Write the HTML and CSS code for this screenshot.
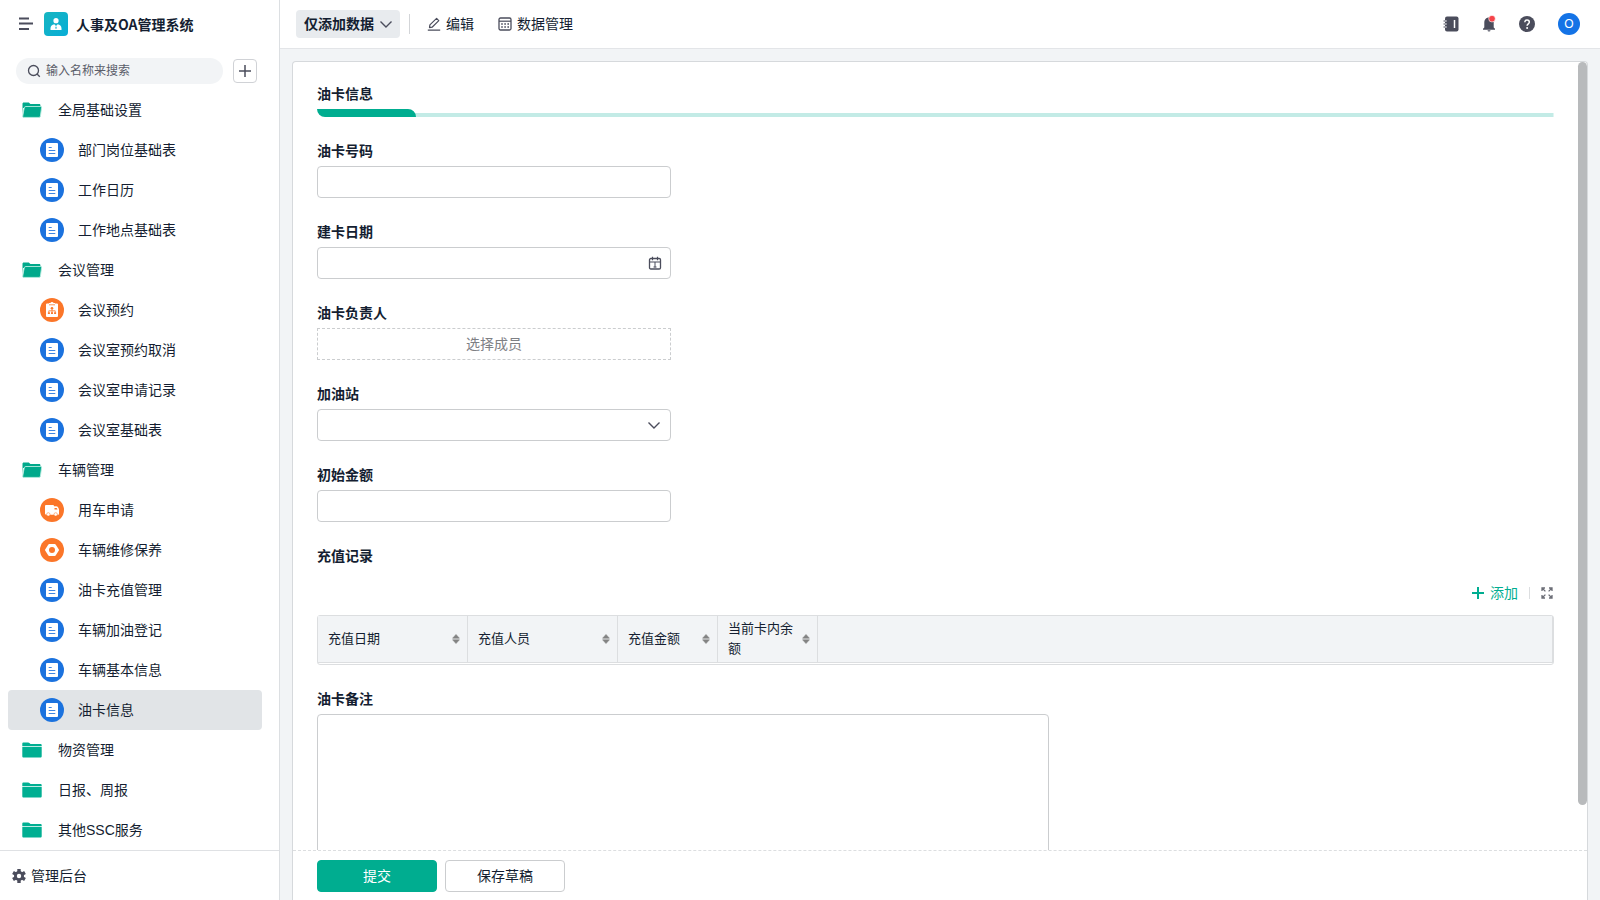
FILE: index.html
```html
<!DOCTYPE html>
<html lang="zh-CN">
<head>
<meta charset="utf-8">
<title>人事及OA管理系统</title>
<link rel="stylesheet" href="styles.css">
</head>
<body>
<svg class="sprite" aria-hidden="true">
  <symbol id="doc" viewBox="0 0 24 24"><circle cx="12" cy="12" r="12" fill="#1b72de"/><rect x="6" y="5" width="12" height="14" rx="1" fill="#fff"/><path d="M8.700 9.500h3M8.700 12.500h6.600M8.700 15.500h6.600" stroke="#3f86e2" stroke-width="1.200"/></symbol>
  <symbol id="meeting" viewBox="0 0 24 24"><circle cx="12" cy="12" r="12" fill="#fb7629"/><path d="M7 5.500h2v-.5h1.500a1.500 1 0 0 1 3 0H15v.5h2a1 1 0 0 1 1 1V18a1 1 0 0 1-1 1H7a1 1 0 0 1-1-1V6.500a1 1 0 0 1 1-1z" fill="#fff"/><path d="M9 6.800h6M12 10v5M8.800 14.500v-1.700h6.400v1.700" stroke="#fb7629" stroke-width=".8" fill="none"/><circle cx="12" cy="10.200" r="1.300" fill="#fb7629"/><path d="M7.900 14.200h2v1.900h-2zM11 14.200h2v1.900h-2zM14.100 14.200h2v1.900h-2z" fill="#fb7629"/></symbol>
  <symbol id="truck" viewBox="0 0 24 24"><circle cx="12" cy="12" r="12" fill="#fb7629"/><path d="M6.200 7H13a1 1 0 0 1 1 1v.3h2.200c1.600 0 2.800 2 2.800 3.700v3.700c0 .6-.4 1-1 1H6.200c-.7 0-1.200-.5-1.200-1.200V8.200C5 7.500 5.500 7 6.200 7z" fill="#fff"/><circle cx="8.300" cy="16.400" r="1.700" fill="#fff" stroke="#fb7629" stroke-width=".5"/><circle cx="15.700" cy="16.400" r="1.700" fill="#fff" stroke="#fb7629" stroke-width=".5"/><path d="M14.500 9.900h1.600c.8 0 1.200.7 1.400 1.500h-3z" fill="#fb7629"/></symbol>
  <symbol id="nut" viewBox="0 0 24 24"><circle cx="12" cy="12" r="12" fill="#fb7629"/><path d="M9.200 7h5.600L18 12l-3.200 5H9.200L6 12z" fill="#fff" stroke="#fff" stroke-width="2" stroke-linejoin="round"/><circle cx="12" cy="12" r="3" fill="#fb7629"/></symbol>
  <symbol id="folder-open" viewBox="0 0 20 16"><path d="M.5 13.500V1.800C.5 1.100 1 .5 1.700.5h5.100l1.600 1.400h8.800c.8 0 1.200.4 1.200 1.100V6H1z" fill="#00a98b"/><path d="M3.900 4.500H18.600c.7 0 1.100.4 1 1.100l-1.200 8.600c-.1.800-.6 1.200-1.300 1.200H1.600c-.7 0-1-.4-.9-1.100L2.200 5.900c.1-.9.800-1.400 1.700-1.400z" fill="#00a98b" stroke="#b9ece0" stroke-width=".9"/></symbol>
  <symbol id="folder" viewBox="0 0 20 16"><path d="M.3 3.900V1.600C.3.900.8.400 1.500.4h4.700c.5 0 .8.200 1.200.5l1.100 1h10c.7 0 1.200.4 1.200 1.200v.8z" fill="#00af92"/><path d="M.3 4.800h19.400v9.500c0 .8-.5 1.300-1.300 1.300H1.600c-.8 0-1.300-.5-1.300-1.300z" fill="#00af92"/></symbol>
  <symbol id="sort" viewBox="0 0 8 10"><path d="M4 .5L7.400 4.200H.6zM4 9.500L7.400 5.800H.6z" fill="#838383" stroke="#838383" stroke-width=".6" stroke-linejoin="round"/></symbol>
  <symbol id="chevron" viewBox="0 0 14 14"><path d="M1.500 4.500L7 10l5.500-5.500" fill="none" stroke="currentColor" stroke-width="1.400"/></symbol>
</svg>
<div class="app">
  <aside class="sidebar">
    <div class="brand">
      <button class="icon-btn" aria-label="菜单"><svg width="14" height="14" viewBox="0 0 14 14"><path d="M0 1.500h10M0 6.500h14M0 12h10" stroke="#4b4d5c" stroke-width="2"/></svg></button>
      <svg class="logo" width="24" height="24" viewBox="0 0 24 24"><defs><linearGradient id="lg" x1="0" y1="0" x2="1" y2="1"><stop offset="0" stop-color="#17b5c0"/><stop offset="1" stop-color="#08add7"/></linearGradient></defs><rect width="24" height="24" rx="4" fill="url(#lg)"/><circle cx="12" cy="8.700" r="2.600" fill="#fff"/><path d="M6.500 18v-1.800c0-2 1.700-3.500 3.800-3.900L12 14l1.700-1.700c2.100.4 3.800 1.900 3.800 3.900V18z" fill="#fff"/><path d="M12 14l.8 2-.8.900-.8-.9z" fill="#11b1cb"/></svg>
      <h1>人事及OA管理系统</h1>
    </div>
    <div class="search-row">
      <label class="search"><svg width="14" height="14" viewBox="0 0 14 14"><circle cx="6.500" cy="6.500" r="5" fill="none" stroke="#4b4d5c" stroke-width="1.300"/><path d="M10 10l2.800 2.800" stroke="#4b4d5c" stroke-width="1.300"/></svg><input type="text" placeholder="输入名称来搜索" aria-label="输入名称来搜索"></label>
      <button class="add-btn" aria-label="新建"><svg width="12" height="12" viewBox="0 0 12 12"><path d="M6 0v12M0 6h12" stroke="#4b4d5c" stroke-width="1.500"/></svg></button>
    </div>
    <nav class="tree">
      <a class="group" href="#"><svg><use href="#folder-open"/></svg>全局基础设置</a>
      <a class="leaf" href="#"><svg><use href="#doc"/></svg>部门岗位基础表</a>
      <a class="leaf" href="#"><svg><use href="#doc"/></svg>工作日历</a>
      <a class="leaf" href="#"><svg><use href="#doc"/></svg>工作地点基础表</a>
      <a class="group" href="#"><svg><use href="#folder-open"/></svg>会议管理</a>
      <a class="leaf" href="#"><svg><use href="#meeting"/></svg>会议预约</a>
      <a class="leaf" href="#"><svg><use href="#doc"/></svg>会议室预约取消</a>
      <a class="leaf" href="#"><svg><use href="#doc"/></svg>会议室申请记录</a>
      <a class="leaf" href="#"><svg><use href="#doc"/></svg>会议室基础表</a>
      <a class="group" href="#"><svg><use href="#folder-open"/></svg>车辆管理</a>
      <a class="leaf" href="#"><svg><use href="#truck"/></svg>用车申请</a>
      <a class="leaf" href="#"><svg><use href="#nut"/></svg>车辆维修保养</a>
      <a class="leaf" href="#"><svg><use href="#doc"/></svg>油卡充值管理</a>
      <a class="leaf" href="#"><svg><use href="#doc"/></svg>车辆加油登记</a>
      <a class="leaf" href="#"><svg><use href="#doc"/></svg>车辆基本信息</a>
      <a class="leaf active" href="#" aria-current="page"><svg><use href="#doc"/></svg>油卡信息</a>
      <a class="group" href="#"><svg><use href="#folder"/></svg>物资管理</a>
      <a class="group" href="#"><svg><use href="#folder"/></svg>日报、周报</a>
      <a class="group" href="#"><svg><use href="#folder"/></svg>其他SSC服务</a>
    </nav>
    <a class="admin" href="#"><svg width="14" height="14" viewBox="0 0 14 14"><g stroke="#4b4d5c" stroke-width="3.400"><path d="M7 0v14M1 3.500l12 7M1 10.500l12-7"/></g><circle cx="7" cy="7" r="5" fill="#4b4d5c"/><circle cx="7" cy="7" r="2.200" fill="#fff"/></svg>管理后台</a>
  </aside>

  <div class="main">
    <header class="topbar">
      <button class="mode">仅添加数据<svg width="14" height="14"><use href="#chevron"/></svg></button>
      <span class="sep"></span>
      <button class="tool edit"><svg width="14" height="14" viewBox="0 0 14 14"><path d="M.8 13.200h12.400M2.500 10.700l.4-2.800L9.600 1.400l2.200 2.200-6.700 6.600z" fill="none" stroke="#4b4d5c" stroke-width="1.200" stroke-linejoin="round"/></svg>编辑</button>
      <button class="tool"><svg width="14" height="14" viewBox="0 0 14 14"><rect x="1" y="1" width="12" height="12" rx="1.500" fill="none" stroke="#4b4d5c" stroke-width="1.300"/><path d="M1 4.200h12" stroke="#4b4d5c" stroke-width="1.200"/><path d="M3.200 7h7.800M3.200 10h7.800" stroke="#4b4d5c" stroke-width="1.600" stroke-dasharray="1.600 1.500"/></svg>数据管理</button>
      <div class="actions">
        <button class="icon-btn" aria-label="通讯录"><svg width="16" height="16" viewBox="0 0 16 16"><rect x="2" y=".5" width="13.500" height="15" rx="2" fill="#4b4d5c"/><path d="M.5 5h3M.5 8h3M.5 11h3" stroke="#fff" stroke-width="2"/><path d="M.5 5h3M.5 8h3M.5 11h3" stroke="#4b4d5c" stroke-width="1.200"/><path d="M11.500 4v8" stroke="#fff" stroke-width="1.500"/></svg></button>
        <button class="icon-btn" aria-label="消息"><svg width="16" height="18" viewBox="0 0 16 18"><path d="M8 2.500c3 0 4.700 2.200 4.700 5V12.500l1.300 1.300v1H2v-1l1.300-1.300V7.500c0-2.800 1.700-5 4.700-5z" fill="#4b4d5c"/><path d="M6.500 15.300h3a1.500 1.300 0 0 1-3 0z" fill="#4b4d5c"/><circle cx="11" cy="3.700" r="3.300" fill="#f5444a" stroke="#fff" stroke-width=".6"/></svg></button>
        <button class="icon-btn" aria-label="帮助"><svg width="16" height="16" viewBox="0 0 16 16"><circle cx="8" cy="8" r="8" fill="#4b4d5c"/><path d="M5.800 6.300c0-1.400 1-2.200 2.200-2.200s2.300.8 2.300 2.100c0 1.600-2.200 1.700-2.200 3.600" fill="none" stroke="#fff" stroke-width="1.500"/><circle cx="8.100" cy="12" r="1" fill="#fff"/></svg></button>
        <button class="avatar">O</button>
      </div>
    </header>

    <main class="card">
      <form class="form" id="card-form">
        <h2>油卡信息</h2>
        <div class="rule"><span></span></div>
        <div class="field"><label for="no">油卡号码</label><input class="control" id="no" type="text"></div>
        <div class="field"><label for="date">建卡日期</label>
          <div class="control with-icon"><input id="date" type="text"><svg width="14" height="14" viewBox="0 0 14 14"><rect x="1.500" y="2.500" width="11" height="10.500" rx="1.300" fill="none" stroke="#4b4d5c" stroke-width="1.300"/><path d="M1.500 6h11M4.500.8v3.400M9.500.8v3.400" fill="none" stroke="#4b4d5c" stroke-width="1.200"/><path d="M7 6v5.500M5.500 11h3" fill="none" stroke="#4b4d5c"/></svg></div></div>
        <div class="field"><label for="owner">油卡负责人</label><button class="control picker" type="button" id="owner">选择成员</button></div>
        <div class="field"><label for="station">加油站</label>
          <div class="control with-icon select"><select id="station"><option></option></select><svg width="14" height="14"><use href="#chevron"/></svg></div></div>
        <div class="field"><label for="amount">初始金额</label><input class="control" id="amount" type="text"></div>
        <section class="records">
          <h3>充值记录</h3>
          <div class="records-tools">
            <button class="add-row" type="button"><svg width="12" height="12" viewBox="0 0 12 12"><path d="M6 0v12M0 6h12" stroke="currentColor" stroke-width="2"/></svg>添加</button>
            <span class="sep"></span>
            <button class="icon-btn" type="button" aria-label="全屏"><svg width="12" height="12" viewBox="0 0 12 12"><path d="M1 4V1h3M8 1h3v3M11 8v3H8M4 11H1V8M1 1l3.400 3.400M11 1L7.600 4.400M11 11L7.600 7.600M1 11l3.400-3.400" fill="none" stroke="#6b6d76" stroke-width="1.300"/></svg></button>
          </div>
          <div class="table-box">
            <table>
              <colgroup><col class="wide"><col class="wide"><col class="narrow"><col class="narrow"><col></colgroup>
              <thead><tr>
                <th><div>充值日期<svg><use href="#sort"/></svg></div></th>
                <th><div>充值人员<svg><use href="#sort"/></svg></div></th>
                <th><div>充值金额<svg><use href="#sort"/></svg></div></th>
                <th><div>当前卡内余额<svg><use href="#sort"/></svg></div></th>
                <th></th>
              </tr></thead>
            </table>
          </div>
        </section>
        <div class="field"><label for="remark">油卡备注</label><textarea id="remark"></textarea></div>
      </form>
      <span class="thumb"></span>
      <footer class="submit-bar">
        <button class="btn primary" form="card-form">提交</button>
        <button class="btn" type="button">保存草稿</button>
      </footer>
    </main>
  </div>
</div>
</body>
</html>
```
FILE: styles.css
```css
* { box-sizing: border-box; }
body {
  margin: 0;
  font-family: "Liberation Sans", "Noto Sans CJK SC", sans-serif;
  font-size: 14px;
  line-height: 20px;
  color: #141e31;
}
h1, h2, h3 { margin: 0; font-size: 14px; line-height: 20px; font-weight: 700; }
a { color: inherit; text-decoration: none; }
button, input, select, textarea { font: inherit; color: inherit; }
button { padding: 0; border: 0; background: none; }
svg { display: block; flex: none; }
.sprite { position: absolute; width: 0; height: 0; }
.icon-btn { display: flex; }

.app { display: flex; height: 100vh; overflow: hidden; background: #f2f4f6; }

.sidebar {
  display: flex;
  flex-direction: column;
  flex: none;
  width: 280px;
  background: #fff;
  border-right: 1px solid #dcdfe2;
}
.brand { display: flex; align-items: center; height: 48px; padding-left: 19px; }
.brand h1 { font-family: "Noto Sans CJK SC", sans-serif; }
.logo { margin: 0 8px 0 11px; }
.search-row { display: flex; align-items: center; gap: 10px; height: 42px; padding: 4px 22px 0 16px; }
.search {
  display: flex;
  align-items: center;
  gap: 5px;
  flex: 1;
  height: 26px;
  padding: 0 11px;
  border-radius: 13px;
  background: #f2f4f6;
}
.search input { flex: 1; min-width: 0; padding: 0; border: 0; outline: 0; background: none; font-size: 12px; }
.search input::placeholder { color: #5a5d69; opacity: 1; }
.add-btn {
  display: grid;
  place-items: center;
  width: 24px;
  height: 24px;
  border: 1px solid #d0d2d6;
  border-radius: 4px;
}
.tree { flex: 1; min-height: 0; overflow: hidden; padding: 0 17px 0 8px; }
.tree a { display: flex; align-items: center; height: 40px; border-radius: 4px; }
.group { padding-left: 14px; gap: 16px; }
.group svg { width: 20px; height: 16px; }
.leaf { padding-left: 32px; gap: 14px; }
.leaf svg { width: 24px; height: 24px; }
.tree .active { background: #e1e4e7; }
.admin {
  display: flex;
  align-items: center;
  gap: 5px;
  height: 50px;
  padding-left: 12px;
  border-top: 1px solid #dfe1e4;
}

.main { display: flex; flex-direction: column; flex: 1; min-width: 0; }
.topbar {
  display: flex;
  align-items: center;
  flex: none;
  height: 49px;
  padding: 0 20px 0 16px;
  background: #fff;
  border-bottom: 1px solid #e3e5e8;
}
.mode {
  display: flex;
  align-items: center;
  gap: 5px;
  height: 28px;
  padding: 0 7px 0 8px;
  border-radius: 4px;
  background: #e8ebee;
  font-weight: 700;
}
.topbar .sep { width: 1px; height: 20px; margin: 0 17px 0 9px; background: #d3d5d8; }
.tool { display: flex; align-items: center; gap: 5px; }
.tool.edit { margin-right: 24px; }
.actions { display: flex; align-items: center; gap: 22px; margin-left: auto; }
.avatar { width: 22px; height: 22px; margin-left: 1px; border-radius: 50%; background: #1473e6; color: #fff; font-size: 12px; }

.card {
  position: relative;
  display: flex;
  flex-direction: column;
  flex: 1;
  min-height: 0;
  margin: 12px 12px 0;
  background: #fff;
  border: 1px solid #d6d9dc;
  border-bottom: 0;
  border-radius: 4px 4px 0 0;
}
.form { flex: 1; min-height: 0; overflow: hidden; padding: 22px 33px 0 24px; }
.field label { display: block; margin-bottom: 5px; font-weight: 700; }
.rule { display: flex; margin: 5px 0 24px; height: 8px; background: linear-gradient(#c3ebe6, #c3ebe6) right bottom / 96% 4px no-repeat; }
.rule span { width: 8%; background: #00ad90; border-radius: 0 8px 0 8px; }
.field { margin-bottom: 24px; }
.control {
  display: block;
  width: 354px;
  max-width: 100%;
  height: 32px;
  padding: 0 8px;
  border: 1px solid #cbcdcf;
  border-radius: 4px;
  background: #fff;
}
.with-icon { display: flex; align-items: center; }
.with-icon.select { padding-right: 9px; }
.with-icon input, .with-icon select { flex: 1; min-width: 0; height: 100%; border: 0; outline: 0; appearance: none; background: none; }
.with-icon svg, .mode svg { color: #4b4d5c; }
.picker { border-style: dashed; border-radius: 0; color: #7e8085; }
.records { margin-bottom: 24px; }
.records-tools { display: flex; align-items: center; justify-content: flex-end; height: 24px; margin: 15px 0 10px; padding-right: 1px; }
.add-row { display: flex; align-items: center; gap: 6px; color: #00ad90; }
.records-tools .sep { width: 1px; height: 12px; margin: 0 11px 0 11px; background: #dcdee0; }
.table-box { padding-bottom: 1px; border: 1px solid #dcdee0; border-radius: 3px; }
table { width: 100%; table-layout: fixed; border-collapse: separate; border-spacing: 0; }
.wide { width: 150px; }
.narrow { width: 100px; }
th {
  height: 47px;
  padding: 0 7px 0 10px;
  border-right: 1px solid #dcdee0;
  border-bottom: 1px solid #dcdee0;
  background: #f2f4f6;
  font-size: 13px;
  font-weight: 400;
  text-align: left;
}
th div { display: flex; align-items: center; justify-content: space-between; gap: 8px; }
th svg { width: 8px; height: 10px; }
textarea {
  display: block;
  width: 732px;
  max-width: 100%;
  height: 200px;
  padding: 8px;
  border: 1px solid #cbcdcf;
  border-radius: 4px;
  resize: none;
}
.thumb { position: absolute; top: 0; right: 0; width: 9px; height: 743px; border-radius: 5px; background: #b8babc; }
.submit-bar { display: flex; align-items: center; gap: 8px; height: 50px; padding: 0 24px; border-top: 1px dashed #dcdee0; }
.btn { width: 120px; height: 32px; border: 1px solid #cbcdcf; border-radius: 4px; background: #fff; }
.btn.primary { background: #00ad90; border-color: #00ad90; color: #fff; }
```
